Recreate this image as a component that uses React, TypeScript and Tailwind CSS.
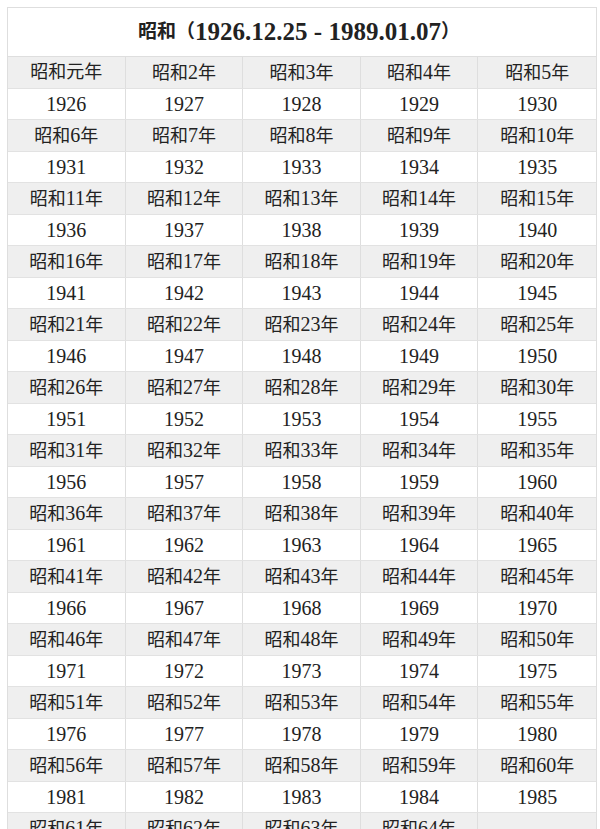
import React from "react";

const eras: { num: string; year: number }[] = Array.from({ length: 64 }, (_, i) => ({
  num: i === 0 ? "元" : String(i + 1),
  year: 1926 + i,
}));

const groups: { num: string; year: number }[][] = [];
for (let i = 0; i < eras.length; i += 5) groups.push(eras.slice(i, i + 5));

function Label({ num }: { num: string }) {
  return (
    <span className="text-[18px]">
      昭和
      {num === "元" ? "元" : <span className="text-[20px]">{num}</span>}
      年
    </span>
  );
}

export default function App() {
  return (
    <div
      className="w-[600px] bg-white pt-[7px] pl-[7px] text-[#222]"
      style={{ fontFamily: '"Liberation Serif", "Noto Sans CJK JP", serif' }}
    >
      <div className="w-[590px] border-l border-r border-t border-[#dedede]">
        <div className="flex h-[49px] items-center justify-center border-b border-[#dedede] pr-[6px] font-bold">
          <span className="text-[19px]">昭和（</span>
          <span className="text-[25px]">1926.12.25 - 1989.01.07</span>
          <span className="text-[19px]">）</span>
        </div>
        {groups.map((g, gi) => (
          <React.Fragment key={gi}>
            <div className="grid h-[31.5px] grid-cols-5 bg-[#efefef] border-b border-[#e2e2e2]">
              {Array.from({ length: 5 }).map((_, ci) => (
                <div
                  key={ci}
                  className="flex items-center justify-center border-r border-[#dedede] last:border-r-0"
                >
                  {g[ci] ? <Label num={g[ci].num} /> : null}
                </div>
              ))}
            </div>
            <div className="grid h-[31.5px] grid-cols-5 bg-white border-b border-[#e2e2e2]">
              {Array.from({ length: 5 }).map((_, ci) => (
                <div
                  key={ci}
                  className="flex items-center justify-center border-r border-[#dedede] text-[20px] last:border-r-0"
                >
                  {g[ci]?.year ?? ""}
                </div>
              ))}
            </div>
          </React.Fragment>
        ))}
      </div>
    </div>
  );
}
